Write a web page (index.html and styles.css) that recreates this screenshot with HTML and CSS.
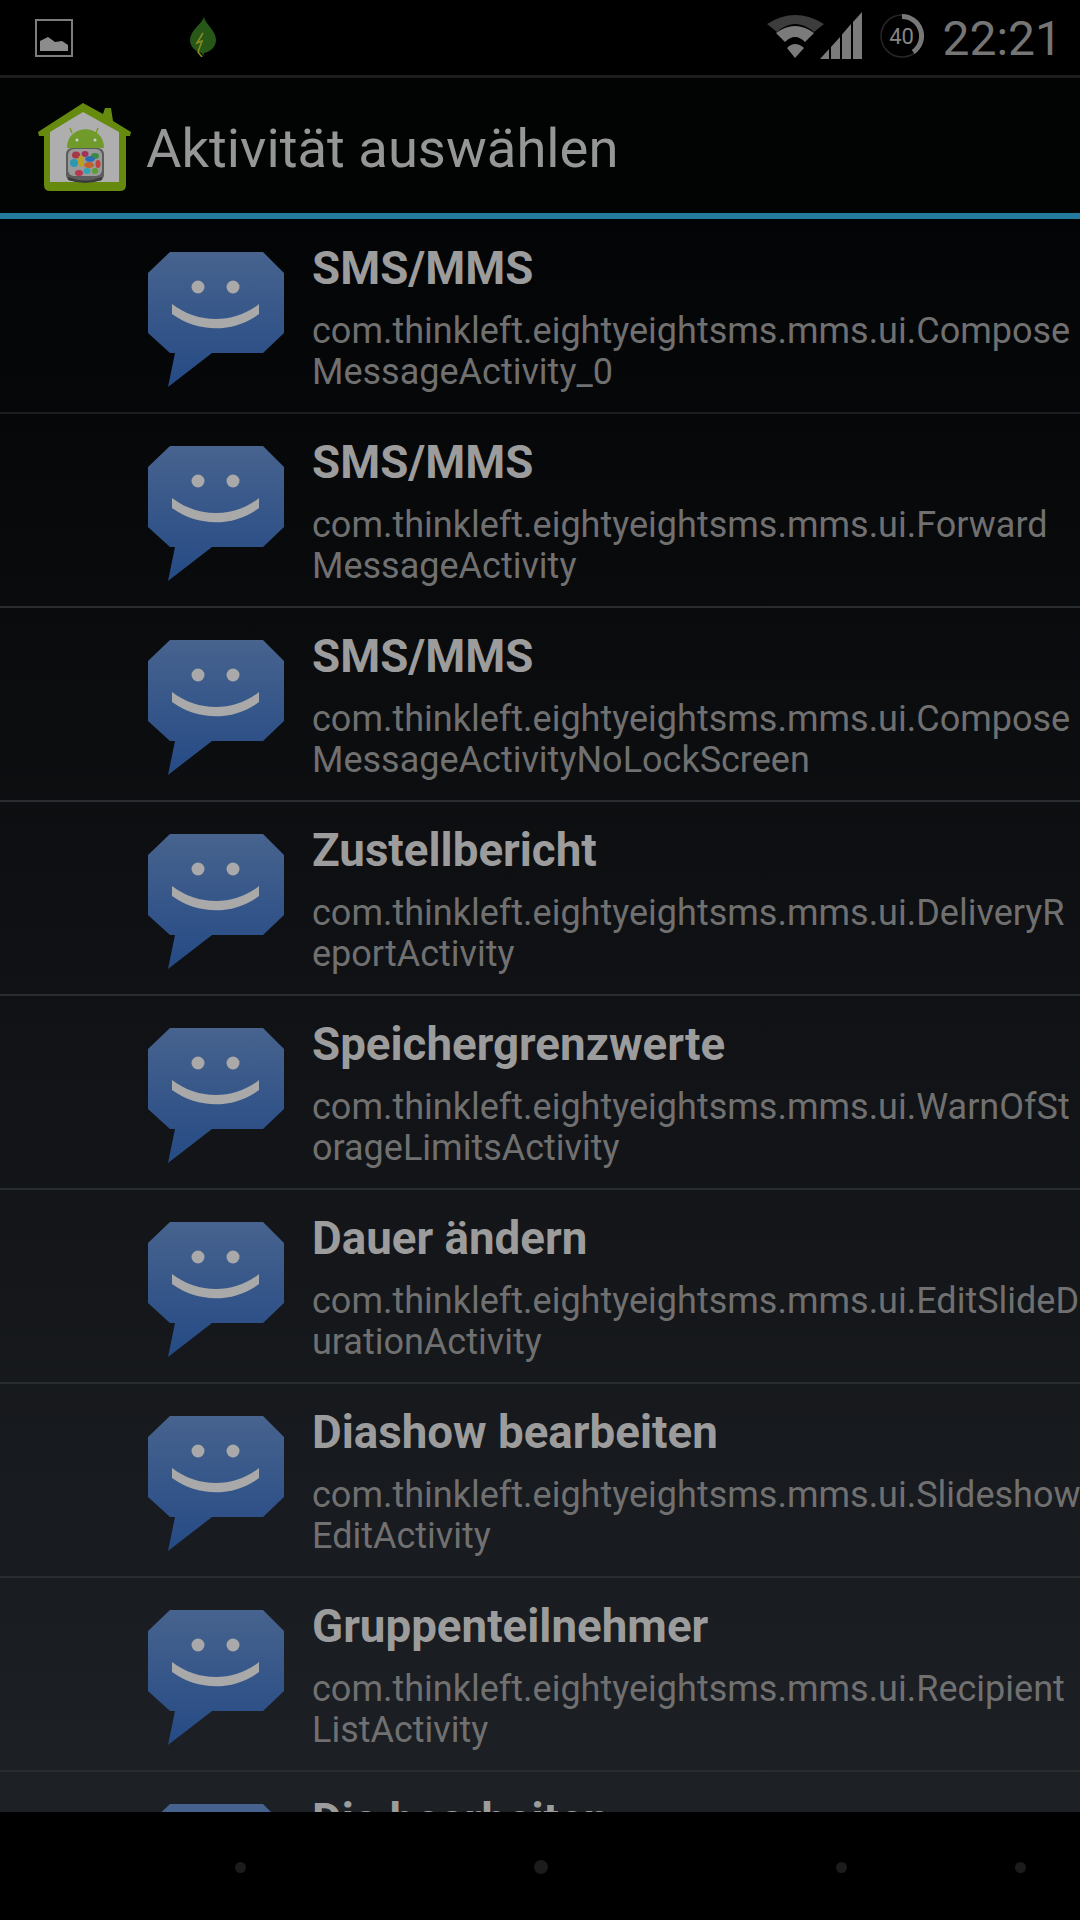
FILE: index.html
```html
<!DOCTYPE html>
<html lang="de">
<head>
<meta charset="utf-8">
<title>Aktivität auswählen</title>
<link rel="stylesheet" href="styles.css">
</head>
<body>
<svg class="defs" width="0" height="0" aria-hidden="true">
  <defs>
    <linearGradient id="bubbleFill" x1="0" y1="0" x2="0" y2="1">
      <stop offset="0" stop-color="#47638e"/>
      <stop offset="1" stop-color="#254a85"/>
    </linearGradient>
    <filter id="soft"><feGaussianBlur stdDeviation="0.5"/></filter>
    <symbol id="bubble" viewBox="0 0 136 135">
      <path d="M22 0H115L136 21V81L115 101H64L20 135L27 101H22L0 81V21Z" fill="url(#bubbleFill)"/>
      <circle cx="50" cy="35" r="6.500" fill="#a9a9a9"/>
      <circle cx="85" cy="35" r="6.500" fill="#a9a9a9"/>
      <path d="M24 52C50 72 86 72 111 52V62C86 81 50 81 24 62Z" fill="#a9a9a9"/>
    </symbol>
  </defs>
</svg>
<div class="screen">
  <header class="status">
    <svg class="pic" width="38" height="38" viewBox="0 0 38 38">
      <rect x="1" y="1" width="36" height="36" fill="none" stroke="#7d7d7d" stroke-width="2"/>
      <path d="M5 32V22L13 18L20 23L27 22L33 26V32Z" fill="#8c8c8c"/>
    </svg>
    <svg class="leaf" width="26" height="40" viewBox="0 0 26 40">
      <path d="M14 0C15 7 26 13 26 23C26 30 20 35 14 36L13 40L12 36C6 35 0 30 0 23C0 13 12 7 14 0Z" fill="#285818"/>
      <path d="M13 16L7 26L12 24L8 35L12 40" fill="none" stroke="#8b8b20" stroke-width="1.500"/>
    </svg>
    <svg class="wifi" width="58" height="44" viewBox="0 0 58 44">
      <path d="M0 9Q28 -9 57 9L47 17Q28 1 10 17Z" fill="#3c3c3c"/>
      <path d="M9 18Q28 4 47 18L38 27Q28 17 18 27Z" fill="#7b7b7b"/>
      <path d="M20 33Q28 25 37 33L28 43Z" fill="#7b7b7b"/>
    </svg>
    <svg class="signal" width="42" height="47" viewBox="0 0 42 47">
      <path d="M0 47L9 37V47ZM11 35L20 25V47H11ZM22 22.500L31 12V47H22ZM33 10L42 0V47H33Z" fill="#7b7b7b"/>
    </svg>
    <svg class="battery" width="44" height="44" viewBox="0 0 44 44">
      <circle cx="22" cy="22" r="21" fill="none" stroke="#262626" stroke-width="1.500"/>
      <path d="M22 2.500A19.500 19.500 0 0 1 33.200 38" fill="none" stroke="#787878" stroke-width="5"/>
      <text class="battery-num" x="21.500" y="29.500" text-anchor="middle">40</text>
    </svg>
    <span class="clock">22:21</span>
  </header>
  <div class="titlebar">
    <svg class="home" width="110" height="105" viewBox="0 0 110 105">
      <g filter="url(#soft)">
        <path d="M53 8L73 19L75 13H81L83 26L101 37L100 41H96V90Q96 96 90 96H20Q14 96 14 90V41H9L8 37Z" fill="#668a0e"/>
        <path d="M53 17L89 37V87H20V37Z" fill="#aeaeae"/>
        <path d="M42 38L40 33M66 38L68 33" stroke="#7d9c24" stroke-width="1.500"/>
        <path d="M37 53C37 28 74 28 74 53Z" fill="#6f9a2c"/>
        <circle cx="47" cy="45" r="1.500" fill="#cfcfcf"/>
        <circle cx="65" cy="45" r="1.500" fill="#cfcfcf"/>
        <rect x="36" y="53" width="38" height="33" rx="6" fill="#5b5b5b"/>
        <rect x="38" y="54" width="34" height="27" rx="6" fill="#9a9a9a"/>
        <ellipse cx="46" cy="60" rx="4" ry="3.500" fill="#a83848"/>
        <ellipse cx="55" cy="59" rx="3.500" ry="3" fill="#a0305c"/>
        <ellipse cx="65" cy="61" rx="4" ry="3" fill="#3c8a40"/>
        <ellipse cx="51" cy="66" rx="3" ry="6" fill="#b8a020"/>
        <ellipse cx="44" cy="68" rx="4" ry="4" fill="#2c98b4"/>
        <ellipse cx="60" cy="64" rx="5" ry="3" fill="#2c70b0"/>
        <ellipse cx="59" cy="70" rx="5" ry="3" fill="#c0602c"/>
        <ellipse cx="68" cy="69" rx="2.500" ry="4" fill="#c04040"/>
        <ellipse cx="49" cy="78" rx="4" ry="3" fill="#b83850"/>
        <ellipse cx="57" cy="76" rx="3.500" ry="3" fill="#30a4b4"/>
        <ellipse cx="65" cy="76" rx="3" ry="3" fill="#58a030"/>
        <path d="M38 82Q55 89 72 82V85Q55 91 38 85Z" fill="#3a3a3a"/>
      </g>
    </svg>
    <h1 class="title">Aktivität auswählen</h1>
  </div>
  <main class="list">
    <div class="row"><svg class="icon"><use href="#bubble"/></svg><div class="text"><div class="name">SMS/MMS</div><div class="cls">com.thinkleft.eightyeightsms.mms.ui.Compose<br>MessageActivity_0</div></div></div>
    <div class="row"><svg class="icon"><use href="#bubble"/></svg><div class="text"><div class="name">SMS/MMS</div><div class="cls">com.thinkleft.eightyeightsms.mms.ui.Forward<br>MessageActivity</div></div></div>
    <div class="row"><svg class="icon"><use href="#bubble"/></svg><div class="text"><div class="name">SMS/MMS</div><div class="cls">com.thinkleft.eightyeightsms.mms.ui.Compose<br>MessageActivityNoLockScreen</div></div></div>
    <div class="row"><svg class="icon"><use href="#bubble"/></svg><div class="text"><div class="name">Zustellbericht</div><div class="cls">com.thinkleft.eightyeightsms.mms.ui.DeliveryR<br>eportActivity</div></div></div>
    <div class="row"><svg class="icon"><use href="#bubble"/></svg><div class="text"><div class="name">Speichergrenzwerte</div><div class="cls">com.thinkleft.eightyeightsms.mms.ui.WarnOfSt<br>orageLimitsActivity</div></div></div>
    <div class="row"><svg class="icon"><use href="#bubble"/></svg><div class="text"><div class="name">Dauer ändern</div><div class="cls">com.thinkleft.eightyeightsms.mms.ui.EditSlideD<br>urationActivity</div></div></div>
    <div class="row"><svg class="icon"><use href="#bubble"/></svg><div class="text"><div class="name">Diashow bearbeiten</div><div class="cls">com.thinkleft.eightyeightsms.mms.ui.Slideshow<br>EditActivity</div></div></div>
    <div class="row"><svg class="icon"><use href="#bubble"/></svg><div class="text"><div class="name">Gruppenteilnehmer</div><div class="cls">com.thinkleft.eightyeightsms.mms.ui.Recipient<br>ListActivity</div></div></div>
    <div class="row"><svg class="icon"><use href="#bubble"/></svg><div class="text"><div class="name">Dia bearbeiten</div></div></div>
  </main>
  <nav class="navbar">
    <span class="dot first"></span>
    <span class="dot big"></span>
    <span class="dot third"></span>
    <span class="dot fourth"></span>
  </nav>
</div>
</body>
</html>
```
FILE: styles.css
```css
* { box-sizing: border-box; }
html, body { margin: 0; padding: 0; background: #000; }
.defs { position: absolute; }
.screen {
  width: 1080px;
  height: 1920px;
  display: flex;
  flex-direction: column;
  overflow: hidden;
  font-family: Roboto, "Liberation Sans", sans-serif;
}
.status {
  height: 78px;
  flex: none;
  display: flex;
  align-items: flex-start;
  padding: 0 18px 0 35px;
  background: #000;
  border-bottom: 3px solid #1c1c1c;
}
.pic { margin-top: 19px; }
.leaf { margin: 17px 0 0 117px; }
.wifi { margin: 15px 0 0 auto; }
.signal { margin: 12px 0 0 -5px; }
.battery { margin: 14px 0 0 18px; }
.battery-num { font-size: 22px; fill: #858585; font-family: Roboto, sans-serif; }
.clock { margin: 16px 0 0 18px; font-size: 48px; font-weight: 400; color: #757575; line-height: 46px; }
.titlebar {
  height: 141px;
  flex: none;
  display: flex;
  align-items: center;
  padding: 4px 0 0 30px;
  background: #020303;
  border-bottom: 6px solid #247a9c;
  gap: 6px;
}
.title { margin: 2px 0 0; font-size: 54.400px; font-weight: 400; color: #969696; }
.list {
  flex: 1;
  min-height: 0;
  overflow: hidden;
  padding-top: 1px;
  background: linear-gradient(#030405, #1d2025);
}
.row {
  height: 194px;
  display: flex;
  align-items: flex-start;
  padding: 32px 0 0 148px;
  border-bottom: 2px solid #2a2d30;
  white-space: nowrap;
}
.row:first-child { border-bottom-color: #1c1d20; }
.icon { width: 136px; height: 135px; flex: none; }
.text { margin-left: 28px; }
.name { font-size: 45.700px; font-weight: 700; color: #9c9c9c; line-height: 50px; margin-top: -8px; }
.cls { font-size: 36px; color: #707070; line-height: 41px; margin-top: 17px; }
.navbar {
  height: 108px;
  flex: none;
  background: #000;
  display: flex;
  align-items: center;
  padding-top: 2px;
}
.dot { width: 11px; height: 11px; border-radius: 50%; background: #1c1c1c; flex: none; }
.big { width: 14px; height: 14px; margin-left: 288px; }
.first { margin-left: 235px; }
.third { margin-left: 288px; }
.fourth { margin-left: 168px; }
```
